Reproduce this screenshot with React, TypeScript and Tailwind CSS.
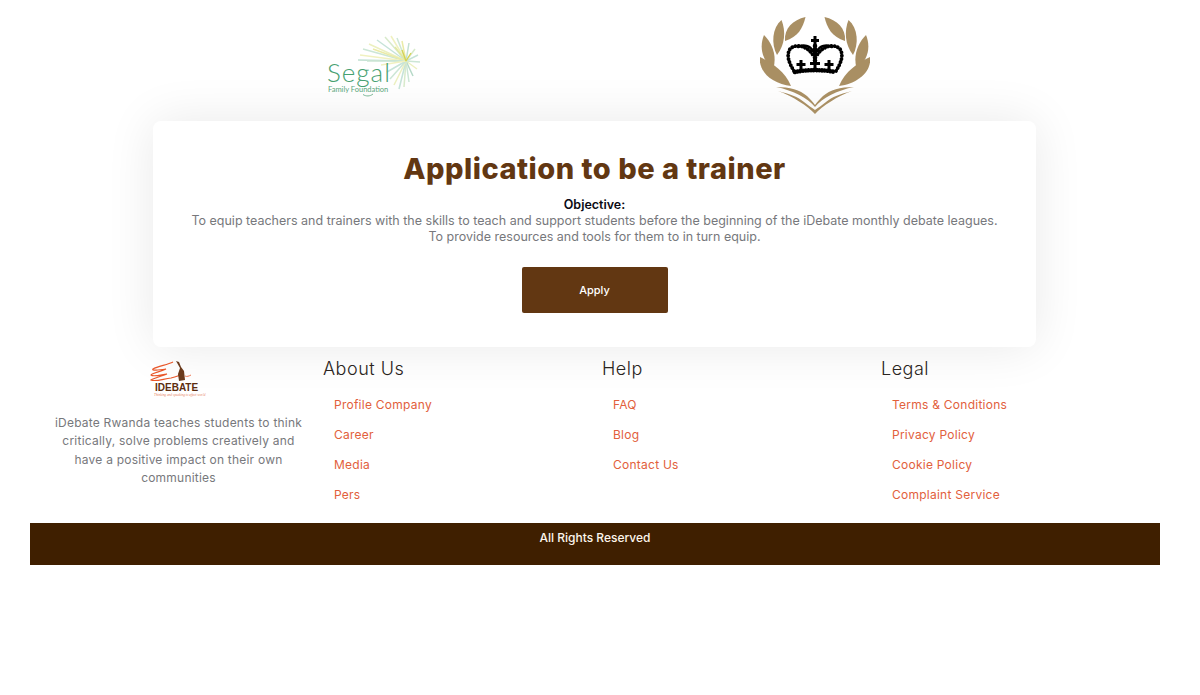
const linkColumns = [
  { title: "About Us", links: ["Profile Company", "Career", "Media", "Pers"] },
  { title: "Help", links: ["FAQ", "Blog", "Contact Us"] },
  { title: "Legal", links: ["Terms & Conditions", "Privacy Policy", "Cookie Policy", "Complaint Service"] },
];

const rays = [
  [60, 2, "#d8eacb"], [52, 5, "#c6e3d8"], [44, 9, "#ecf0c0"], [38, 14, "#cce6d5"], [35, 20, "#f0f1c0"],
  [33, 25, "#c2e0d2"], [66, 1, "#f0f1c0"], [72, 3, "#cce6d5"], [77, 6, "#eaeba8"], [84, 8, "#c2e0d2"],
  [90, 14, "#d8eacb"], [93, 20, "#c6e3d8"], [95, 27, "#cce6d5"], [92, 34, "#ecf0c0"], [88, 41, "#b6d9c8"],
  [84, 47, "#cce6d5"], [79, 52, "#d8eacb"], [74, 54, "#c6e3d8"], [69, 50, "#ecf0c0"], [65, 44, "#cce6d5"],
  [62, 37, "#c6e3d8"], [48, 14, "#eaeba8"], [42, 26, "#cce6d5"], [56, 30, "#f0f1c0"], [70, 12, "#e2e99f"],
] as const;

function SegalLogo() {
  return (
    <svg width="100" height="66" viewBox="0 0 100 66" className="block">
      {rays.map(([x, y, color], i) => (
        <line key={i} x1="81" y1="26" x2={x} y2={y} stroke={color} strokeWidth="1.5" />
      ))}
      <path d="M81 26 L77 15 M81 26 L86 18" stroke="#d6d24f" strokeWidth="1.3" />
      <text x="2" y="47" fontFamily="Lato, sans-serif" fontWeight="300" fontSize="26" letterSpacing="1" fill="#46a070">
        Segal
      </text>
      <text x="3" y="57" fontFamily="Lato, sans-serif" fontSize="7.5" fill="#5aa67c">
        Family Foundation
      </text>
      <path d="M38 59.5 C41 61.5 45 61.5 48 59" fill="none" stroke="#5aa67c" strokeWidth="0.8" />
    </svg>
  );
}

function Leaf({ d }: { d: string }) {
  return (
    <>
      <path d={d} fill="#a98f63" />
      <path d={d} fill="#a98f63" transform="matrix(-1 0 0 1 110 0)" />
    </>
  );
}

function CrownLogo() {
  return (
    <svg width="110" height="100" viewBox="0 0 110 100" className="block">
      <Leaf d="M45.5 1 C33 4 24 12 25 25 C38 21 43 12 45.5 1Z" />
      <Leaf d="M21.5 4 C12 12 11 28 17 39 C25 29 26 15 21.5 4Z" />
      <Leaf d="M4 19 C-1 31 2 45 13.5 52 C17 39 12 27 4 19Z" />
      <Leaf d="M0 41 C-2 56 13 68 31 70 C25 55 12 47 0 41Z" />
      <Leaf d="M16 71 C30 71 40 74 47 80 C50 83 53 86 55 89 L55 91 C48 82 32 74 16 71Z" />
      <Leaf d="M18 75 C30 78 38 81 44 86 C48 89 52 92 55 94 L55 98 C48 90 32 80 18 75Z" />
      <g fill="none" stroke="#000" strokeLinecap="round">
        <path d="M34 55 C29 47 26 39 30 33 C36 27 47 30 53 39" strokeWidth="3.8" strokeDasharray="0.1 3.2" />
        <path d="M76 55 C81 47 84 39 80 33 C74 27 63 30 57 39" strokeWidth="3.8" strokeDasharray="0.1 3.2" />
        <path d="M38 31 C44 28 50 30 53 35 M72 31 C66 28 60 30 57 35" strokeWidth="2.6" />
        <path d="M55 30 V46" strokeWidth="4.6" strokeDasharray="0.1 2.8" />
        <path d="M55 20 V29 M51 24.5 H59" strokeWidth="3" strokeLinecap="butt" />
        <path d="M35 56 C47 53.5 63 53.5 75 56" strokeWidth="4.6" strokeDasharray="0.1 2.6" />
      </g>
      <g stroke="#000" strokeWidth="3">
        <path d="M41 44 V54 M36.5 48.5 H45.5" />
        <path d="M55 43 V54 M50 47.5 H60" />
        <path d="M69 44 V54 M64.5 48.5 H73.5" />
      </g>
    </svg>
  );
}

function IdebateLogo() {
  return (
    <svg width="60" height="38" viewBox="0 0 60 38" className="block">
      <path
        d="M24 3 C18 6 9 7 4 10 C2 12 10 11 17 10 C11 13 3 14 2 16 C4 18 11 16 18 15 C13 17 5 19 2 21 C6 23 14 20 22 19 C26 18 30 17 33 15"
        fill="none"
        stroke="#e8572a"
        strokeWidth="1.1"
      />
      <path d="M27 2 L30 3 L32 8 L35 12 L36 21 L30 22 L29 15 L31 9Z" fill="#6a3a1c" />
      <path d="M36 17 C38 18 40 17 42 16" fill="none" stroke="#e8572a" strokeWidth="0.8" />
      <text x="6" y="32" fontFamily="'Liberation Sans', sans-serif" fontWeight="700" fontSize="10" fill="#5c2d10">
        IDEBATE
      </text>
      <text x="5" y="37" fontFamily="'Liberation Serif', serif" fontStyle="italic" fontSize="3.4" fill="#e8835f">
        Thinking and speaking to effect world
      </text>
    </svg>
  );
}

export default function App() {
  return (
    <div className="min-h-[695px] bg-white font-['Inter',sans-serif]">
      <div className="mx-[30px] w-[1130px]">
        <div className="flex h-[121px] items-start pl-[295px]">
          <div className="mt-[35px]">
            <SegalLogo />
          </div>
          <div className="ml-[335px] mt-[16px]">
            <CrownLogo />
          </div>
        </div>

        <main className="ml-[123px] flex h-[226px] w-[883px] flex-col items-center rounded-lg bg-white pt-[28px] text-center shadow-[0_0_50px_rgba(0,0,0,0.09)]">
          <h1 className="text-[29px] leading-[40px] font-extrabold tracking-[0.5px] text-[#623712]">
            Application to be a trainer
          </h1>
          <p className="mt-[8px] text-[12.5px] leading-[16px] font-semibold text-[#0b0b14]">Objective:</p>
          <p className="text-[12.5px] leading-[16px] text-[#77787c]">
            To equip teachers and trainers with the skills to teach and support students before the beginning of the iDebate monthly debate leagues.
            <br />
            To provide resources and tools for them to in turn equip.
          </p>
          <button className="mt-[22px] h-[46px] w-[146px] rounded-[2px] bg-[#623712] text-[11px] font-medium text-white">
            Apply
          </button>
        </main>

        <footer className="flex h-[176px]">
          <div className="flex w-[293px] flex-col items-center pl-[4px] pt-[12px]">
            <IdebateLogo />
            <p className="mt-[17px] w-[258px] text-center text-[12px] leading-[18.4px] tracking-[0.22px] text-[#77787c]">
              iDebate Rwanda teaches students to think critically, solve problems creatively and have a positive impact on their own communities
            </p>
          </div>
          {linkColumns.map((col) => (
            <div key={col.title} className="w-[279px] pt-[9px]">
              <h2 className="text-[18px] leading-[26px] font-light tracking-[0.5px] text-[#2a2420]">{col.title}</h2>
              <ul className="mt-[14px] flex flex-col gap-[12px] pl-[11px]">
                {col.links.map((link) => (
                  <li key={link} className="text-[12px] leading-[18px] tracking-[0.25px] text-[#e2603c]">
                    {link}
                  </li>
                ))}
              </ul>
            </div>
          ))}
        </footer>

        <div className="h-[42px] bg-[#3f1f00] pt-[7px] text-center text-[12px] leading-[16px] font-medium text-[#fdf6ec]">
          All Rights Reserved
        </div>
      </div>
    </div>
  );
}
